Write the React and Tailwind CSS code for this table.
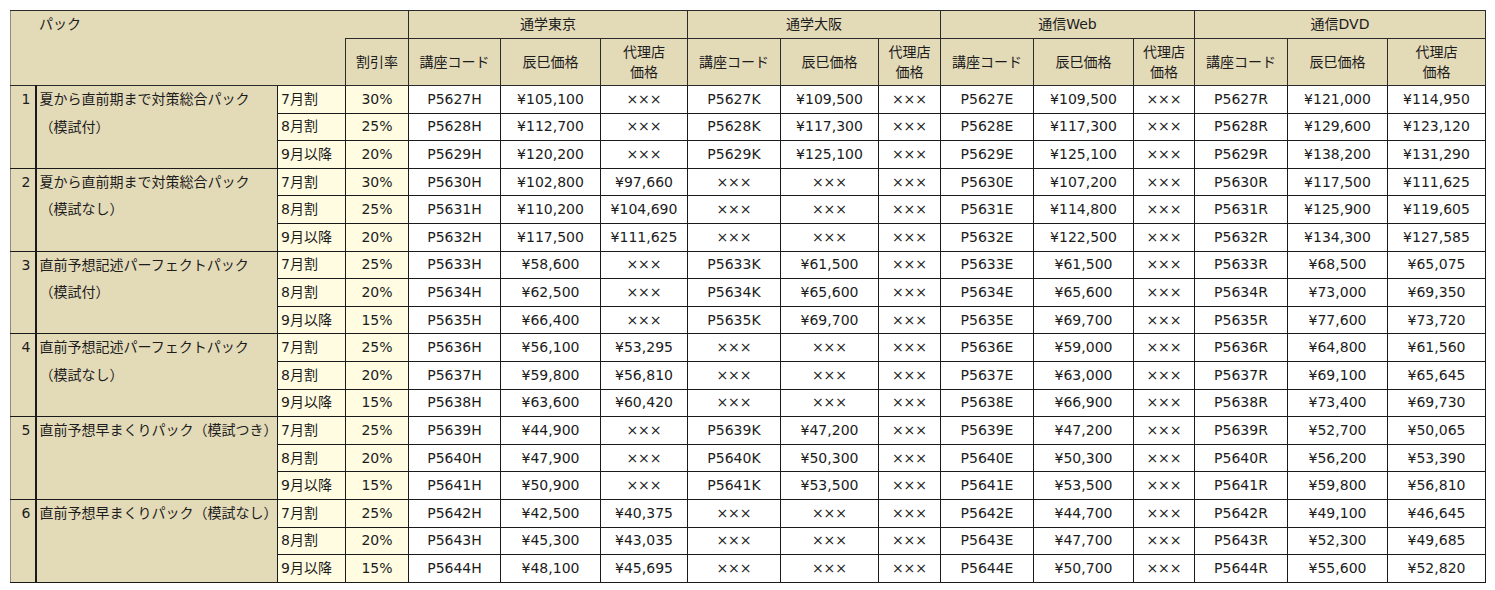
import React from 'react'

const X = '×××'

const groups = [
  {
    no: 1,
    name: ['夏から直前期まで対策総合パック', '（模試付）'],
    rows: [
      ['7月割', '30%', 'P5627H', '¥105,100', X, 'P5627K', '¥109,500', X, 'P5627E', '¥109,500', X, 'P5627R', '¥121,000', '¥114,950'],
      ['8月割', '25%', 'P5628H', '¥112,700', X, 'P5628K', '¥117,300', X, 'P5628E', '¥117,300', X, 'P5628R', '¥129,600', '¥123,120'],
      ['9月以降', '20%', 'P5629H', '¥120,200', X, 'P5629K', '¥125,100', X, 'P5629E', '¥125,100', X, 'P5629R', '¥138,200', '¥131,290'],
    ],
  },
  {
    no: 2,
    name: ['夏から直前期まで対策総合パック', '（模試なし）'],
    rows: [
      ['7月割', '30%', 'P5630H', '¥102,800', '¥97,660', X, X, X, 'P5630E', '¥107,200', X, 'P5630R', '¥117,500', '¥111,625'],
      ['8月割', '25%', 'P5631H', '¥110,200', '¥104,690', X, X, X, 'P5631E', '¥114,800', X, 'P5631R', '¥125,900', '¥119,605'],
      ['9月以降', '20%', 'P5632H', '¥117,500', '¥111,625', X, X, X, 'P5632E', '¥122,500', X, 'P5632R', '¥134,300', '¥127,585'],
    ],
  },
  {
    no: 3,
    name: ['直前予想記述パーフェクトパック', '（模試付）'],
    rows: [
      ['7月割', '25%', 'P5633H', '¥58,600', X, 'P5633K', '¥61,500', X, 'P5633E', '¥61,500', X, 'P5633R', '¥68,500', '¥65,075'],
      ['8月割', '20%', 'P5634H', '¥62,500', X, 'P5634K', '¥65,600', X, 'P5634E', '¥65,600', X, 'P5634R', '¥73,000', '¥69,350'],
      ['9月以降', '15%', 'P5635H', '¥66,400', X, 'P5635K', '¥69,700', X, 'P5635E', '¥69,700', X, 'P5635R', '¥77,600', '¥73,720'],
    ],
  },
  {
    no: 4,
    name: ['直前予想記述パーフェクトパック', '（模試なし）'],
    rows: [
      ['7月割', '25%', 'P5636H', '¥56,100', '¥53,295', X, X, X, 'P5636E', '¥59,000', X, 'P5636R', '¥64,800', '¥61,560'],
      ['8月割', '20%', 'P5637H', '¥59,800', '¥56,810', X, X, X, 'P5637E', '¥63,000', X, 'P5637R', '¥69,100', '¥65,645'],
      ['9月以降', '15%', 'P5638H', '¥63,600', '¥60,420', X, X, X, 'P5638E', '¥66,900', X, 'P5638R', '¥73,400', '¥69,730'],
    ],
  },
  {
    no: 5,
    name: ['直前予想早まくりパック（模試つき）'],
    rows: [
      ['7月割', '25%', 'P5639H', '¥44,900', X, 'P5639K', '¥47,200', X, 'P5639E', '¥47,200', X, 'P5639R', '¥52,700', '¥50,065'],
      ['8月割', '20%', 'P5640H', '¥47,900', X, 'P5640K', '¥50,300', X, 'P5640E', '¥50,300', X, 'P5640R', '¥56,200', '¥53,390'],
      ['9月以降', '15%', 'P5641H', '¥50,900', X, 'P5641K', '¥53,500', X, 'P5641E', '¥53,500', X, 'P5641R', '¥59,800', '¥56,810'],
    ],
  },
  {
    no: 6,
    name: ['直前予想早まくりパック（模試なし）'],
    rows: [
      ['7月割', '25%', 'P5642H', '¥42,500', '¥40,375', X, X, X, 'P5642E', '¥44,700', X, 'P5642R', '¥49,100', '¥46,645'],
      ['8月割', '20%', 'P5643H', '¥45,300', '¥43,035', X, X, X, 'P5643E', '¥47,700', X, 'P5643R', '¥52,300', '¥49,685'],
      ['9月以降', '15%', 'P5644H', '¥48,100', '¥45,695', X, X, X, 'P5644E', '¥50,700', X, 'P5644R', '¥55,600', '¥52,820'],
    ],
  },
]

const widths = [25, 242, 68, 63, 92, 100, 87, 93, 98, 62, 93, 100, 61, 93, 100, 98]
const sites = ['通学東京', '通学大阪', '通信Web', '通信DVD']

const hd = 'border border-[#2a2a2a] bg-[#e3dab8] text-center align-middle p-0'
const td = 'border border-[#1a1a1a] text-center align-middle p-0 whitespace-nowrap'

export default function App() {
  return (
    <div className="min-h-screen bg-white pt-[10px] pl-[10px]" style={{ fontFamily: '"DejaVu Sans", "Noto Sans CJK JP", sans-serif' }}>
      <table className="table-fixed border-collapse w-[1475px] text-[14px] text-[#1c1c1c] border-l border-l-[#8a8a80]">
        <colgroup>
          {widths.map((w, i) => (
            <col key={i} style={{ width: w }} />
          ))}
        </colgroup>
        <thead>
          <tr className="h-[28px]">
            <th colSpan={4} className={`${hd} border-b-0 border-l-[#8a8a80] text-left font-normal pl-[28px]`}>パック</th>
            {sites.map((s) => (
              <th key={s} colSpan={3} className={`${hd} font-normal`}>{s}</th>
            ))}
          </tr>
          <tr className="h-[47px] leading-[20px]">
            <th colSpan={3} className={`${hd} border-t-0 border-l-[#8a8a80]`}></th>
            <th className={`${hd} font-normal`}>割引率</th>
            {sites.map((s) => (
              <React.Fragment key={s}>
                <th className={`${hd} font-normal`}>講座コード</th>
                <th className={`${hd} font-normal`}>辰巳価格</th>
                <th className={`${hd} font-normal`}>代理店<br />価格</th>
              </React.Fragment>
            ))}
          </tr>
        </thead>
        <tbody>
          {groups.map((g) =>
            g.rows.map((r, ri) => (
              <tr key={`${g.no}-${ri}`} className="h-[27.6px]">
                {ri === 0 && (
                  <>
                    <td rowSpan={3} className="border border-[#1a1a1a] border-l-[#8a8a80] border-r-2 bg-[#e3dab8] align-top text-right pr-[4px] leading-[27.6px]">
                      {g.no}
                    </td>
                    <td rowSpan={3} className="border border-[#1a1a1a] bg-[#e3dab8] align-top text-left pl-[3px] leading-[27.6px] whitespace-nowrap">
                      {g.name.map((n, ni) => (
                        <div key={ni}>{n}</div>
                      ))}
                    </td>
                  </>
                )}
                <td className={`${td} bg-[#fffce2] text-left pl-[3px]`}>{r[0]}</td>
                <td className={`${td} bg-[#fffce2]`}>{r[1]}</td>
                {r.slice(2).map((c, ci) => (
                  <td key={ci} className={`${td} bg-white`}>{c}</td>
                ))}
              </tr>
            ))
          )}
        </tbody>
      </table>
    </div>
  )
}
